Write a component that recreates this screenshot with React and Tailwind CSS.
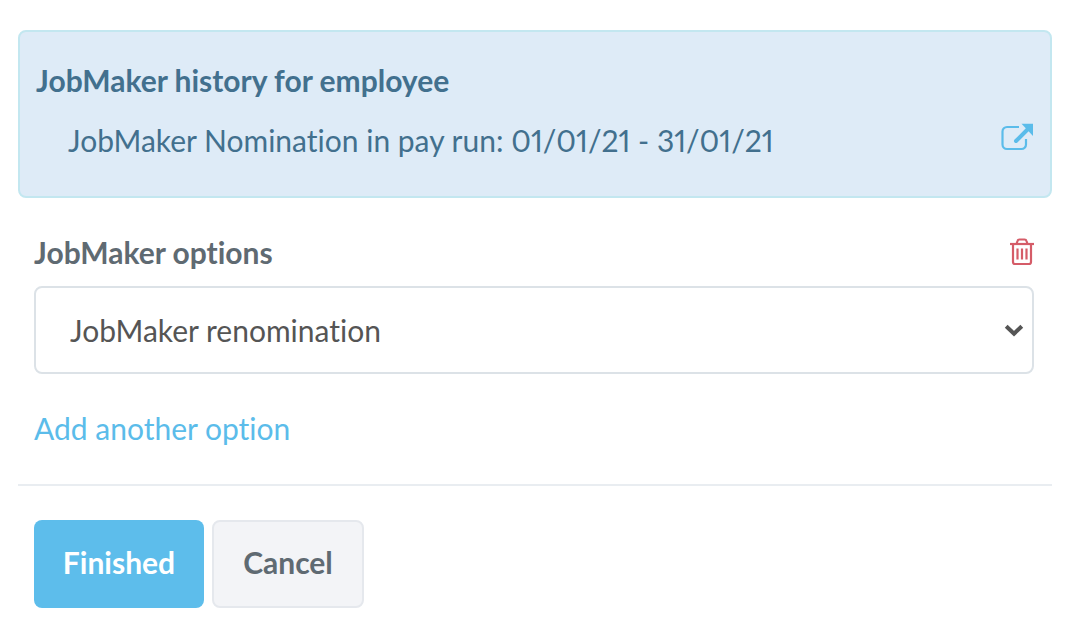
import React, { useState } from "react";

const ExternalLinkIcon = () => (
  <svg viewBox="0 0 32 28" className="w-8 h-7" fill="none" aria-hidden="true">
    <path d="M18 4H6a4.500 4.500 0 0 0-4.500 4.500v13A4.500 4.500 0 0 0 6 26h14.500a4.500 4.500 0 0 0 4.500-4.500V16" stroke="currentColor" strokeWidth="2.200" />
    <path d="M15 18L27 6" stroke="currentColor" strokeWidth="4" strokeLinecap="round" />
    <path d="M20.500 .8H32V13z" fill="currentColor" />
  </svg>
);

const TrashIcon = () => (
  <svg viewBox="0 0 24 28" className="w-6 h-7" fill="none" stroke="currentColor" strokeWidth="2.200" aria-hidden="true">
    <path d="M0 6h24" />
    <path d="M6.500 6l1-3a2 2 0 0 1 1.900-1.500h5.200a2 2 0 0 1 1.900 1.500l1 3" />
    <path d="M3 6v18a2 2 0 0 0 2 2h14a2 2 0 0 0 2-2V6" />
    <path d="M7.500 10.500v11M12 10.500v11M16.500 10.500v11" />
  </svg>
);

const ChevronIcon = () => (
  <svg viewBox="0 0 20 14" className="w-5 h-3.5" fill="none" aria-hidden="true">
    <path d="M2.200 3.200L10 10.700L17.800 3.200" stroke="currentColor" strokeWidth="4" />
  </svg>
);

const HistoryPanel = () => (
  <section className="rounded-lg border-2 border-[#c3e7f0] bg-[#deebf7] px-4 pt-7 pb-9 text-[#42708e]">
    <h2 className="font-bold">JobMaker history for employee</h2>
    <div className="mt-5 flex items-center justify-between pl-8 pr-px">
      <p className="proportional-nums">JobMaker Nomination in pay run: 01/01/21 - 31/01/21</p>
      <a href="#pay-run" aria-label="Open pay run" className="-mt-1.5 text-[#5bbcea]">
        <ExternalLinkIcon />
      </a>
    </div>
  </section>
);

const App = () => {
  const [option, setOption] = useState("renomination");

  return (
    <main className="bg-white pt-[30px] pl-[18px] pr-[22px] pb-[22px] font-['Lato',sans-serif] text-[30px] leading-10 [font-variant-ligatures:none]">
      <HistoryPanel />

      <form onSubmit={(e) => e.preventDefault()}>
        <div className="pt-[34px] pb-9 pl-4 pr-[18px]">
          <div className="flex items-center justify-between">
            <label htmlFor="jobmaker-option" className="font-bold text-[#5f6a72]">JobMaker options</label>
            <button type="button" aria-label="Remove option" className="text-[#d55c68] cursor-pointer">
              <TrashIcon />
            </button>
          </div>
          <div className="relative mt-3.5">
            <select
              id="jobmaker-option"
              value={option}
              onChange={(e) => setOption(e.target.value)}
              className="h-[88px] w-full appearance-none rounded-lg border-2 border-[#dce2e7] bg-white pl-[34px] pr-12 text-[#555] outline-none [font-variant-ligatures:none]"
            >
              <option value="nomination">JobMaker nomination</option>
              <option value="renomination">JobMaker renomination</option>
            </select>
            <span className="pointer-events-none absolute inset-y-0 right-2.5 flex items-center text-[#555]">
              <ChevronIcon />
            </span>
          </div>
          <a href="#add-option" className="mt-[34px] inline-block text-[#5bbcea]">Add another option</a>
        </div>

        <div className="flex gap-2 border-t-2 border-[#e9edf1] pt-[34px] pl-4">
          <button type="submit" className="h-[88px] min-w-[170px] rounded-lg bg-[#5dbdeb] px-6 pb-1 font-bold text-white cursor-pointer">
            Finished
          </button>
          <button type="button" className="h-[88px] min-w-[152px] rounded-lg border-2 border-[#e5e8ed] bg-[#f3f4f7] px-6 pb-1 font-bold text-[#5f6a72] cursor-pointer">
            Cancel
          </button>
        </div>
      </form>
    </main>
  );
};

export default App;
